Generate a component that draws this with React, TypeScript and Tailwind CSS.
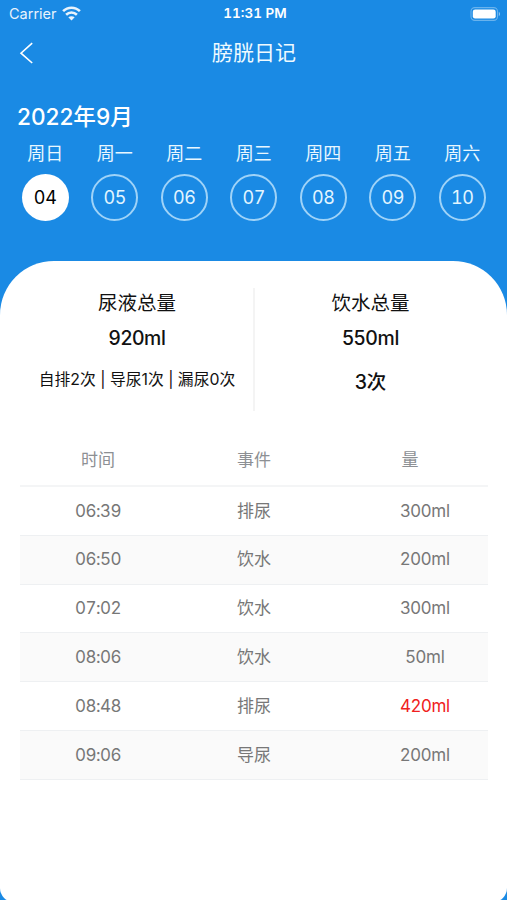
import React from "react";

const days = [
  ["周日", "04"],
  ["周一", "05"],
  ["周二", "06"],
  ["周三", "07"],
  ["周四", "08"],
  ["周五", "09"],
  ["周六", "10"],
];

const records = [
  { time: "06:39", event: "排尿", amount: "300ml" },
  { time: "06:50", event: "饮水", amount: "200ml" },
  { time: "07:02", event: "饮水", amount: "300ml" },
  { time: "08:06", event: "饮水", amount: "50ml" },
  { time: "08:48", event: "排尿", amount: "420ml", alert: true },
  { time: "09:06", event: "导尿", amount: "200ml" },
];

function WifiIcon() {
  return (
    <svg className="mb-px ml-[5px] h-[15px] w-[19px]" viewBox="0 0 19 15" fill="none" stroke="white" strokeWidth="2.6">
      <path d="M1.1 5.2C5.8 .5 13.2 .5 17.9 5.2" />
      <path d="M4.1 8.7C7.2 5.7 11.8 5.7 14.9 8.7" />
      <path d="M9.5 14.6 6.3 11.3C8.2 9.8 10.8 9.8 12.7 11.3Z" fill="white" stroke="none" />
    </svg>
  );
}

function BatteryIcon() {
  return (
    <svg className="h-[14px] w-[31px]" viewBox="0 0 31 14" fill="none">
      <rect x="1" y=".6" width="26.5" height="12.8" rx="3.8" stroke="white" strokeOpacity=".35" strokeWidth="1.1" />
      <rect x="2.8" y="2.4" width="22.9" height="9.2" rx="2.3" fill="white" />
      <path d="M28.8 4.8c1.7.7 1.7 3.7 0 4.4Z" fill="white" fillOpacity=".5" />
    </svg>
  );
}

function StatusBar() {
  return (
    <div className="grid h-[27px] grid-cols-3 items-center pr-[6px] pl-[9px] text-white">
      <div className="flex items-center text-[14.5px] leading-[27px] opacity-90">
        <span>Carrier</span>
        <WifiIcon />
      </div>
      <div className="text-center text-[13.5px] leading-[27px] font-semibold tabular-nums">11:31 PM</div>
      <div className="flex justify-end">
        <BatteryIcon />
      </div>
    </div>
  );
}

export default function App() {
  return (
    <div className="flex h-[900px] w-[507px] flex-col overflow-hidden bg-[#1a8ae4] font-[Inter,'Noto_Sans_CJK_SC',sans-serif]">
      <StatusBar />
      <header className="grid h-[51px] shrink-0 grid-cols-[80px_1fr_80px] items-center text-white">
        <svg className="ml-[19px] h-[22px] w-[15px]" viewBox="0 0 15 22" fill="none" stroke="white" strokeWidth="1.6">
          <path d="M13.2 1.2 2 11.2 13.2 21" />
        </svg>
        <h1 className="pl-px text-center text-[21px] leading-[51px] font-normal text-[#eefaff]">膀胱日记</h1>
      </header>
      <section className="h-[183px] shrink-0 text-white">
        <h2 className="mt-[23px] pl-[17px] text-[22.6px] leading-[32px] font-medium">2022年9月</h2>
        <div className="mt-[9px] grid grid-cols-7 pr-[10px] pl-[10.4px]">
          {days.map(([week, day], i) => (
            <div key={day} className="flex flex-col items-center">
              <span className="text-[18px] leading-[24px] text-[#e8f7ff]">{week}</span>
              <span
                className={
                  i === 0
                    ? "mt-[8px] flex h-[47px] w-[47px] items-center justify-center rounded-full bg-white text-[18px] tracking-[-0.4px] text-black tabular-nums"
                    : "mt-[8px] flex h-[47px] w-[47px] items-center justify-center rounded-full border-2 border-[#9fd3f8] text-[18px] tracking-[-0.4px] text-[#e2f5ff] tabular-nums"
                }
              >
                {day}
              </span>
            </div>
          ))}
        </div>
      </section>
      <main className="h-[641px] shrink-0 rounded-t-[54px] rounded-b-[14px] bg-white pt-[27px]">
        <section className="flex h-[123px] text-center text-[#111]">
          <div className="flex w-[253px] flex-col pl-[21px]">
            <span className="mt-px text-[19.5px] leading-[28px]">尿液总量</span>
            <span className="mt-[7px] text-[19.4px] leading-[28px] font-medium tracking-[-0.4px]">920ml</span>
            <span className="mt-[16px] text-[15.8px] leading-[24px] whitespace-nowrap">自排2次 | 导尿1次 | 漏尿0次</span>
          </div>
          <div className="w-[2px] bg-[#f4f4f4]" />
          <div className="flex flex-1 flex-col pr-[21px]">
            <span className="mt-px text-[19.5px] leading-[28px]">饮水总量</span>
            <span className="mt-[7px] text-[19.4px] leading-[28px] font-medium tracking-[-0.3px]">550ml</span>
            <span className="mt-[16px] text-[19.5px] leading-[28px] font-medium">3次</span>
          </div>
        </section>
        <section className="mx-[20px] mt-[21px] w-[468px] text-center text-[17px] text-[#777]">
          <div className="grid h-[55px] grid-cols-3 items-center border-b-2 border-[#f4f5f6] pt-[4px] text-[#8d9094]">
            <span>时间</span>
            <span>事件</span>
            <span>量</span>
          </div>
          {records.map((r, i) => (
            <div
              key={r.time}
              className={
                i % 2
                  ? "grid h-[48.8px] grid-cols-3 items-center border-b border-[#eef0f2] bg-[#fafafa] pt-px"
                  : "grid h-[48.8px] grid-cols-3 items-center border-b border-[#eef0f2] pt-px"
              }
            >
              <span className="tracking-[-0.5px] tabular-nums">{r.time}</span>
              <span>{r.event}</span>
              <span className={r.alert ? "pl-[30px] tracking-[-0.2px] text-[#f02020]" : "pl-[30px] tracking-[-0.2px]"}>
                {r.amount}
              </span>
            </div>
          ))}
        </section>
      </main>
    </div>
  );
}
